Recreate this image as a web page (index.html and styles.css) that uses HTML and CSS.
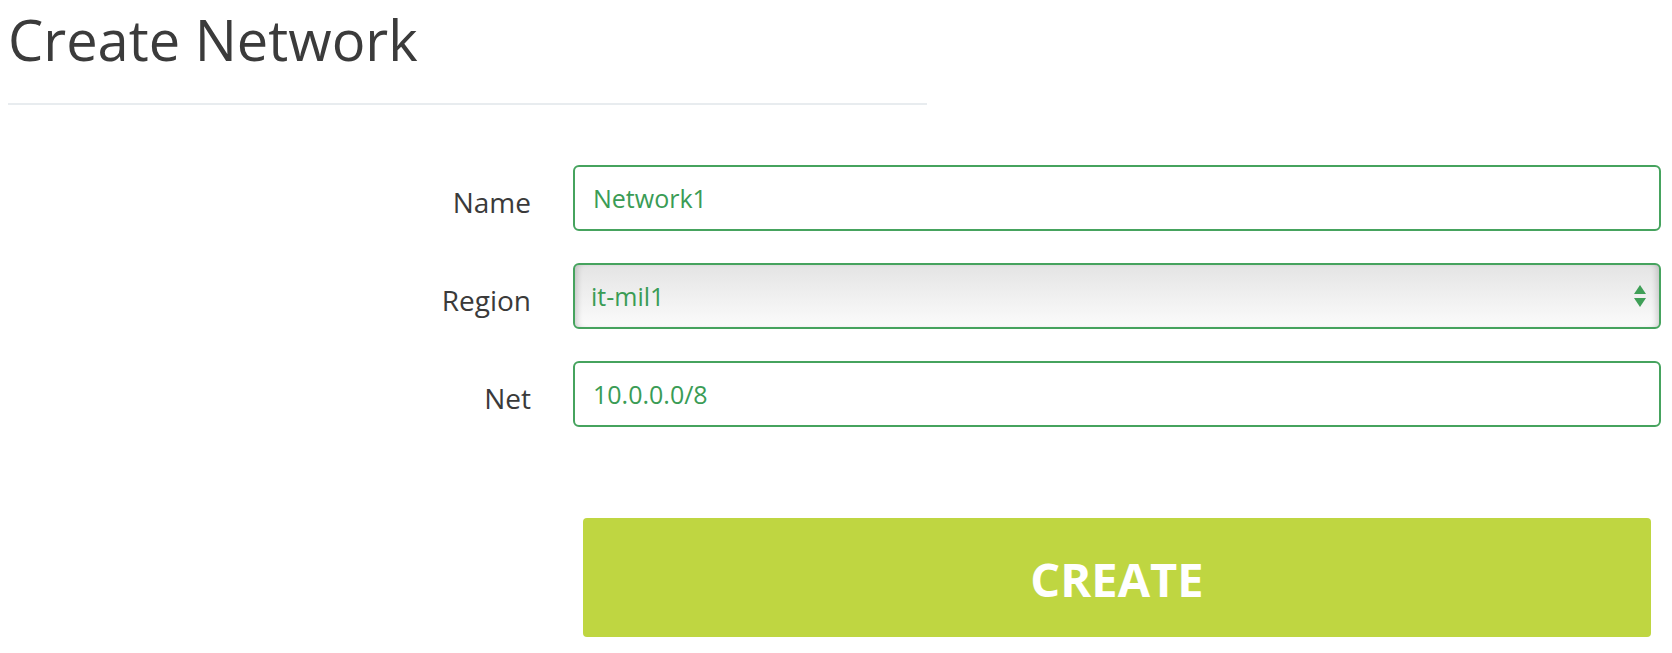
FILE: index.html
```html
<!DOCTYPE html>
<html>
<head>
<meta charset="utf-8">
<link rel="stylesheet" href="styles.css">
</head>
<body>
<div class="page">
  <h1 class="title">Create Network</h1>
  <div class="divider"></div>
  <form class="form">
    <label class="label" for="name">Name</label>
    <input class="field" id="name" type="text" value="Network1">
    <label class="label" for="region">Region</label>
    <div class="select-wrap">
      <select class="field select" id="region">
        <option>it-mil1</option>
      </select>
      <svg class="arrows" width="12" height="22" viewBox="0 0 12 22">
        <polygon points="6,0 12,9 0,9" fill="#3f9f57"/>
        <polygon points="0,13 12,13 6,22" fill="#3f9f57"/>
      </svg>
    </div>
    <label class="label" for="net">Net</label>
    <input class="field" id="net" type="text" value="10.0.0.0/8">
    <div class="spacer"></div>
    <button class="btn" type="button">CREATE</button>
  </form>
</div>
</body>
</html>
```
FILE: styles.css
```css
html, body {
  margin: 0;
  padding: 0;
  background: #ffffff;
}
.page {
  padding: 0 11px 0 8px;
  font-family: "Open Sans", "DejaVu Sans", sans-serif;
}
.title {
  margin: 1px 0 0 0;
  font-size: 56px;
  line-height: 76px;
  font-weight: 400;
  color: #3b3b3b;
}
.divider {
  width: 919px;
  height: 2px;
  margin-top: 26px;
  background: #e8ecef;
}
.form {
  margin-top: 60px;
  display: grid;
  grid-template-columns: 523px 1fr;
  column-gap: 42px;
  row-gap: 32px;
}
.label {
  align-self: center;
  justify-self: end;
  padding-top: 8px;
  font-size: 28px;
  color: #3a3a3a;
}
.field {
  box-sizing: border-box;
  width: 100%;
  height: 66px;
  margin: 0;
  border: 2px solid #46a35e;
  border-radius: 6px;
  padding: 0 18px;
  font-family: "Open Sans", "DejaVu Sans", sans-serif;
  font-size: 25px;
  color: #3a9c55;
  background: #ffffff;
  outline: none;
}
.select-wrap {
  position: relative;
}
.select {
  -webkit-appearance: none;
  appearance: none;
  padding-left: 16px;
  background: linear-gradient(#e4e4e4, #fbfbfb);
  box-shadow: inset 6px 0 6px -4px rgba(0,0,0,0.18), inset -6px 0 6px -4px rgba(0,0,0,0.18);
}
.arrows {
  position: absolute;
  right: 15px;
  top: 22px;
}
.spacer {
  grid-column: 1;
}
.btn {
  margin: 59px 10px 0 10px;
  height: 119px;
  border: none;
  border-radius: 4px;
  background: #bfd641;
  color: #ffffff;
  font-family: "Open Sans", "DejaVu Sans", sans-serif;
  font-weight: 700;
  font-size: 47px;
  padding: 3px 0 0 0;
}
```
